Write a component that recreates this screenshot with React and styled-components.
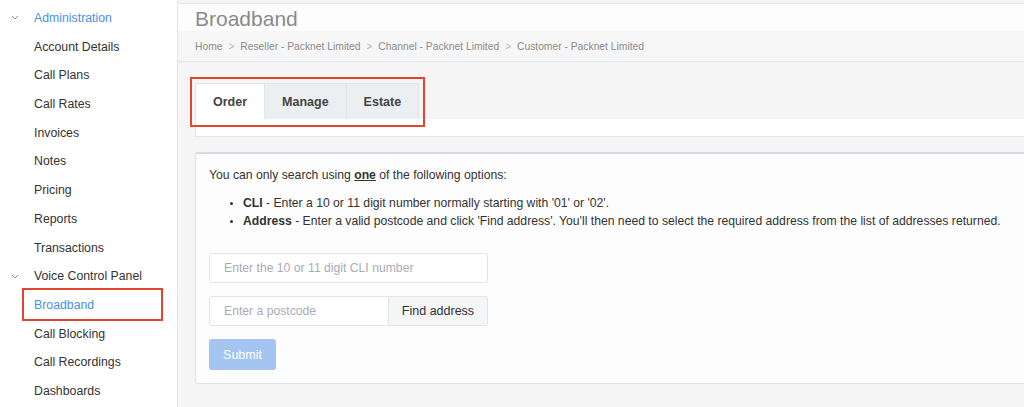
import React from "react";
import styled, { createGlobalStyle, css } from "styled-components";

const Global = createGlobalStyle`
  html, body { margin: 0; padding: 0; }
  body {
    font-family: "Liberation Sans", Arial, Helvetica, sans-serif;
    background: #f5f5f5;
    color: #333;
    -webkit-font-smoothing: antialiased;
  }
  *, *::before, *::after { box-sizing: border-box; }
`;

const Shell = styled.div`
  display: flex;
  width: 1024px;
  height: 407px;
  overflow: hidden;
`;

const Sidebar = styled.nav`
  width: 178px;
  flex: none;
  background: #ffffff;
  border-right: 1px solid #e4e4e4;
  padding-top: 3.5px;
  display: flex;
  flex-direction: column;
`;

const NavRow = styled.div`
  position: relative;
  height: 28.73px;
  flex: none;
  display: flex;
  align-items: center;
  font-size: 12.3px;
  padding-left: ${(p) => (p.$group ? "11px" : "34px")};
  color: ${(p) => (p.$active ? "#4a8fe0" : "#333")};
  white-space: nowrap;
  ${(p) =>
    p.$highlight &&
    css`
      &::after {
        content: "";
        position: absolute;
        left: 22px;
        top: -3px;
        width: 141px;
        height: 33px;
        border: 2px solid #e2442e;
      }
    `}
`;

const Chevron = styled.span`
  width: 23px;
  display: inline-flex;
  align-items: center;
  flex: none;
`;

const Main = styled.main`
  flex: 1;
  min-width: 0;
  display: flex;
  flex-direction: column;
  background: #f5f5f5;
  padding-top: 3px;
`;

const Header = styled.header`
  border-top: 1px solid #e6e6e6;
  background: #fdfdfd;
`;

const Title = styled.h1`
  margin: 0;
  height: 27px;
  line-height: 30px;
  padding-left: 17px;
  font-size: 21px;
  font-weight: 400;
  color: #8a8a8a;
`;

const Crumbs = styled.div`
  height: 31px;
  background: #f6f6f6;
  border-bottom: 1px solid #dfe5ec;
  display: flex;
  align-items: center;
  gap: 5px;
  padding-left: 17px;
  font-size: 10.3px;
  color: #8c8c8c;
`;

const Sep = styled.span`
  color: #b5b5b5;
  font-size: 10px;
  margin: 0 1px;
`;

const Body = styled.div`
  padding: 21px 0 0 17px;
  display: flex;
  flex-direction: column;
`;

const TabWrap = styled.div`
  position: relative;
  display: flex;
  &::after {
    content: "";
    position: absolute;
    left: -5px;
    top: -6px;
    width: 235px;
    height: 50px;
    border: 2px solid #e2442e;
    pointer-events: none;
  }
`;

const Tab = styled.div`
  height: 36px;
  padding: 0 ${(p) => p.$pad}px;
  display: flex;
  align-items: center;
  font-size: 12.5px;
  font-weight: 700;
  color: #444;
  background: ${(p) => (p.$active ? "#ffffff" : "#eceff2")};
  border: 1px solid #e1e5ea;
  border-bottom: none;
  margin-left: -1px;
  &:first-child { margin-left: 0; }
`;

const TabPane = styled.div`
  height: 18px;
  margin-right: -4px;
  background: #ffffff;
  border: 1px solid #e3e6ea;
  border-top: none;
`;

const Card = styled.section`
  margin-top: 15px;
  margin-right: -4px;
  background: #fdfdfd;
  border: 1px solid #dde3ea;
  border-top: 2px solid #d3dbe5;
  border-radius: 3px;
  padding: 12px 0 13px 13px;
  display: flex;
  flex-direction: column;
`;

const Intro = styled.p`
  margin: 0;
  font-size: 12.2px;
  line-height: 18px;
  color: #333;
  b { text-decoration: underline; }
`;

const List = styled.ul`
  margin: 10px 0 0;
  padding-left: 34px;
  font-size: 12.2px;
  line-height: 18px;
  color: #333;
  li::marker { font-size: 10px; }
`;

const Input = styled.input`
  height: 30px;
  width: ${(p) => p.$w}px;
  border: 1px solid #e1e4e8;
  border-radius: ${(p) => (p.$joined ? "3px 0 0 3px" : "3px")};
  background: #ffffff;
  padding: 0 14px;
  font-family: inherit;
  font-size: 12.2px;
  color: #333;
  outline: none;
  &::placeholder { color: #a9abb3; }
`;

const Field = styled.div`
  margin-top: ${(p) => p.$mt}px;
  display: flex;
`;

const AddonButton = styled.button`
  height: 30px;
  width: 99px;
  border: 1px solid #e1e4e8;
  border-left: none;
  border-radius: 0 3px 3px 0;
  background: #f4f5f7;
  font-family: inherit;
  font-size: 12.5px;
  color: #333;
  padding: 0;
`;

const Submit = styled.button`
  margin-top: 13px;
  align-self: flex-start;
  height: 31px;
  width: 67px;
  border: none;
  border-radius: 3px;
  background: #a4c4f1;
  color: #ffffff;
  font-family: inherit;
  font-size: 12.5px;
  padding: 0;
`;

const ChevronIcon = () => (
  <svg width="8" height="5" viewBox="0 0 8 5">
    <path d="M1 1 L4 4 L7 1" fill="none" stroke="#8a8f99" strokeWidth="1" />
  </svg>
);

const nav = [
  { label: "Administration", group: true, active: true },
  { label: "Account Details" },
  { label: "Call Plans" },
  { label: "Call Rates" },
  { label: "Invoices" },
  { label: "Notes" },
  { label: "Pricing" },
  { label: "Reports" },
  { label: "Transactions" },
  { label: "Voice Control Panel", group: true },
  { label: "Broadband", active: true, highlight: true },
  { label: "Call Blocking" },
  { label: "Call Recordings" },
  { label: "Dashboards" },
];

const crumbs = [
  "Home",
  "Reseller - Packnet Limited",
  "Channel - Packnet Limited",
  "Customer - Packnet Limited",
];

export default function App() {
  return (
    <>
      <Global />
      <Shell>
        <Sidebar>
          {nav.map((n) => (
            <NavRow
              key={n.label}
              $group={n.group}
              $active={n.active}
              $highlight={n.highlight}
            >
              {n.group && (
                <Chevron>
                  <ChevronIcon />
                </Chevron>
              )}
              {n.label}
            </NavRow>
          ))}
        </Sidebar>
        <Main>
          <Header>
            <Title>Broadband</Title>
            <Crumbs>
              {crumbs.map((c, i) => (
                <React.Fragment key={c}>
                  {i > 0 && <Sep>&gt;</Sep>}
                  <span>{c}</span>
                </React.Fragment>
              ))}
            </Crumbs>
          </Header>
          <Body>
            <TabWrap>
              <Tab $active $pad={17}>Order</Tab>
              <Tab $pad={17}>Manage</Tab>
              <Tab $pad={17}>Estate</Tab>
            </TabWrap>
            <TabPane />
            <Card>
              <Intro>
                You can only search using <b>one</b> of the following options:
              </Intro>
              <List>
                <li>
                  <strong>CLI</strong> - Enter a 10 or 11 digit number normally
                  starting with '01' or '02'.
                </li>
                <li>
                  <strong>Address</strong> - Enter a valid postcode and click
                  'Find address'. You'll then need to select the required
                  address from the list of addresses returned.
                </li>
              </List>
              <Field $mt={23}>
                <Input $w={279} placeholder="Enter the 10 or 11 digit CLI number" />
              </Field>
              <Field $mt={13}>
                <Input $w={180} $joined placeholder="Enter a postcode" />
                <AddonButton>Find address</AddonButton>
              </Field>
              <Submit>Submit</Submit>
            </Card>
          </Body>
        </Main>
      </Shell>
    </>
  );
}
